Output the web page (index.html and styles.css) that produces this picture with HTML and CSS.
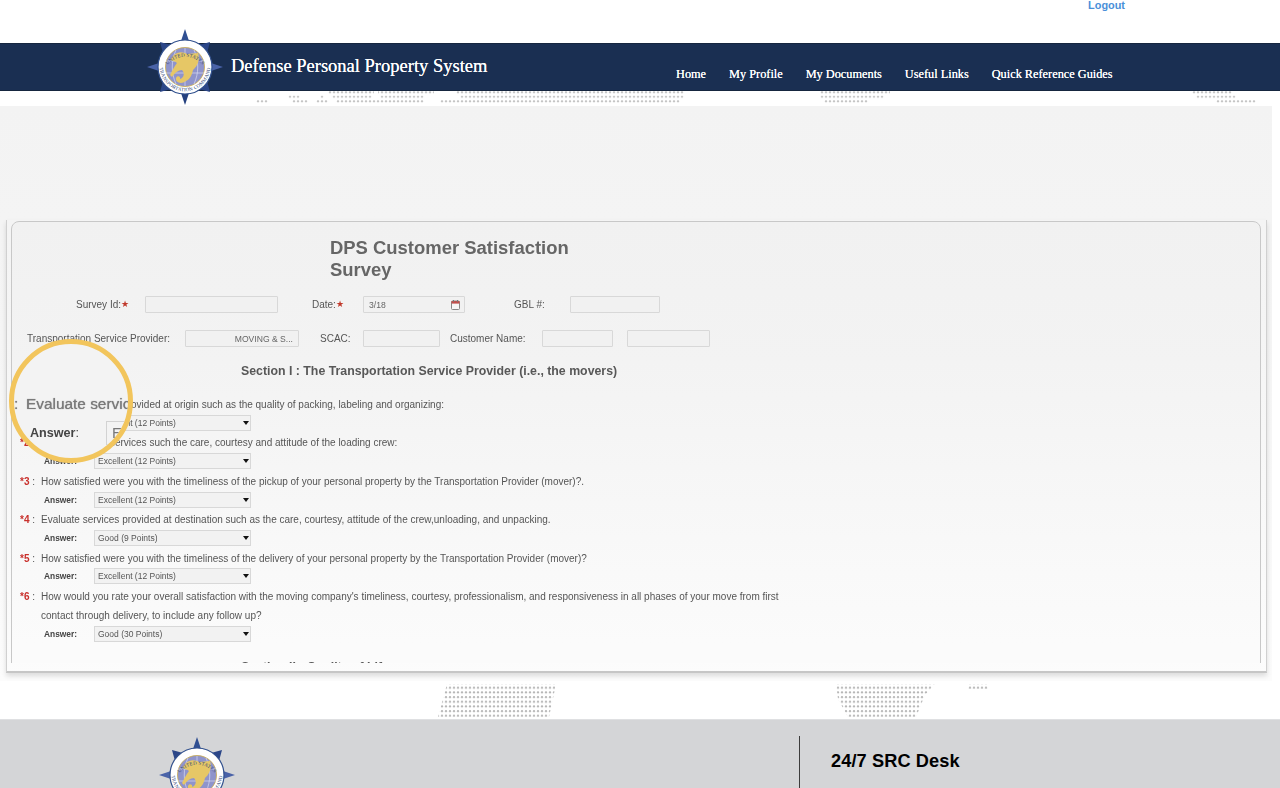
FILE: index.html
```html
<!DOCTYPE html>
<html lang="en">
<head>
<meta charset="utf-8">
<title>DPS Customer Satisfaction Survey</title>
<link rel="stylesheet" href="styles.css">
</head>
<body>
<svg class="defs" width="0" height="0" aria-hidden="true">
  <defs>
    <pattern id="dotsTop" width="4" height="4.5" patternUnits="userSpaceOnUse"><circle cx="2" cy="1.2" r="1.05" fill="#bdbdbd"/></pattern>
    <pattern id="dotsBottom" width="4" height="4.67" patternUnits="userSpaceOnUse"><circle cx="2" cy="2" r="1.1" fill="#b4b4b4"/></pattern>
    <symbol id="seal" viewBox="-39 -39 78 78">
      <polygon points="0,-38 6,-20 -6,-20" fill="#2f4f92"/>
      <polygon points="0,38 6,20 -6,20" fill="#24407f"/>
      <polygon points="-38,0 -20,-6 -20,6" fill="#4a63a8"/>
      <polygon points="38,0 20,-6 20,6" fill="#4a63a8"/>
      <polygon points="-25,-25 -22,-14 -14,-22" fill="#2b4688"/>
      <polygon points="25,-25 22,-14 14,-22" fill="#2b4688"/>
      <polygon points="-25,25 -22,14 -14,22" fill="#2b4688"/>
      <polygon points="25,25 22,14 14,22" fill="#2b4688"/>
      <circle r="27" fill="#fff" stroke="#33528f" stroke-width="1.2"/>
      <circle r="19.5" fill="#8f94cb" stroke="#c9a94a" stroke-width=".8"/>
      <path d="M-19,-6H19M-19,6H19M0,-19V19M-9,-17C-14,-6 -14,6 -9,17M9,-17C14,-6 14,6 9,17" fill="none" stroke="#d8daf0" stroke-width=".7"/>
      <path d="M-10,-12C-6,-16 0,-15 3,-13L14,-14C16,-8 14,-1 9,3C8,8 6,12 2,14C-3,18 -9,15 -8,11C-7,8 -3,9 -4,12C0,11 1,6 -2,3C-6,3 -9,6 -12,10L-14,8C-12,4 -10,0 -7,-4C-9,-6 -12,-6 -14,-7Z" fill="#e6c766" transform="translate(-1 0)"/>
      <path id="sealTop" d="M-21.5,6A22.3,22.3 0 0 1 21.5,6" fill="none"/>
      <path id="sealBottom" d="M-25.3,2A25.5,25.5 0 0 0 25.3,2" fill="none"/>
      <text class="seal-text"><textPath href="#sealTop" startOffset="50%" text-anchor="middle">UNITED STATES</textPath></text>
      <text class="seal-text"><textPath href="#sealBottom" startOffset="50%" text-anchor="middle">TRANSPORTATION COMMAND</textPath></text>
    </symbol>
  </defs>
</svg>
<div class="page">
  <div class="top"><a class="logout" href="#">Logout</a></div>

  <header class="band">
    <svg class="seal seal-head" role="img" aria-label="Seal"><use href="#seal"/></svg>
    <div class="brand">Defense Personal Property System</div>
    <nav class="nav">
      <a href="#">Home</a>
      <a href="#">My Profile</a>
      <a href="#">My Documents</a>
      <a href="#">Useful Links</a>
      <a href="#">Quick Reference Guides</a>
    </nav>
  </header>

  <svg class="strip-top" width="1280" height="15" aria-hidden="true">
    <g fill="url(#dotsTop)">
      <rect x="328" y="0" width="46" height="4"/><rect x="378" y="0" width="56" height="4"/><rect x="456" y="0" width="228" height="4"/><rect x="820" y="0" width="70" height="4"/><rect x="1192" y="0" width="40" height="4"/>
      <rect x="288" y="4.5" width="12" height="4"/><rect x="320" y="4.5" width="4" height="4"/><rect x="332" y="4.5" width="40" height="4"/><rect x="380" y="4.5" width="44" height="4"/><rect x="460" y="4.5" width="224" height="4"/><rect x="820" y="4.5" width="64" height="4"/><rect x="1196" y="4.5" width="40" height="4"/>
      <rect x="256" y="9" width="12" height="4"/><rect x="292" y="9" width="16" height="4"/><rect x="316" y="9" width="12" height="4"/><rect x="336" y="9" width="88" height="4"/><rect x="440" y="9" width="240" height="4"/><rect x="824" y="9" width="44" height="4"/><rect x="1216" y="9" width="40" height="4"/>
    </g>
  </svg>

  <main class="main">
    <div class="frame">
      <div class="clip">
        <form class="sheet">
          <h1 class="title">DPS Customer Satisfaction Survey</h1>

          <div class="fields fields-a">
            <label class="lbl lbl-id">Survey Id:<span class="req">★</span></label>
            <input class="box box-id" type="text">
            <label class="lbl lbl-date">Date:<span class="req">★</span></label>
            <span class="box box-date">3/18
              <svg class="cal" width="9" height="10" viewBox="0 0 9 10" aria-hidden="true"><rect x=".5" y="1" width="8" height="8.5" rx="1" fill="#f6f6f6" stroke="#888"/><rect x=".5" y="1" width="8" height="2.6" fill="#c0504d"/><path d="M2.5 0v2M6.5 0v2" stroke="#777"/></svg>
            </span>
            <label class="lbl lbl-gbl">GBL #:</label>
            <input class="box box-gbl" type="text">
          </div>

          <div class="fields fields-b">
            <label class="lbl lbl-tsp">Transportation Service Provider:</label>
            <input class="box box-tsp" type="text" value="MOVING &amp; S...">
            <label class="lbl lbl-scac">SCAC:</label>
            <input class="box box-scac" type="text">
            <label class="lbl lbl-cust">Customer Name:</label>
            <input class="box box-first" type="text">
            <input class="box box-last" type="text">
          </div>

          <h2 class="section">Section I : The Transportation Service Provider (i.e., the movers)</h2>

          <div class="q"><span class="num"><b>*1</b> :</span><p>Evaluate services provided at origin such as the quality of packing, labeling and organizing:</p></div>
          <div class="a"><span class="ans">Answer:</span><span class="sel"><select><option>Excellent (12 Points)</option></select></span></div>

          <div class="q"><span class="num"><b>*2</b> :</span><p>Evaluate origin services such the care, courtesy and attitude of the loading crew:</p></div>
          <div class="a"><span class="ans">Answer:</span><span class="sel"><select><option>Excellent (12 Points)</option></select></span></div>

          <div class="q"><span class="num"><b>*3</b> :</span><p>How satisfied were you with the timeliness of the pickup of your personal property by the Transportation Provider (mover)?.</p></div>
          <div class="a"><span class="ans">Answer:</span><span class="sel"><select><option>Excellent (12 Points)</option></select></span></div>

          <div class="q"><span class="num"><b>*4</b> :</span><p>Evaluate services provided at destination such as the care, courtesy, attitude of the crew,unloading, and unpacking.</p></div>
          <div class="a"><span class="ans">Answer:</span><span class="sel"><select><option>Good (9 Points)</option></select></span></div>

          <div class="q"><span class="num"><b>*5</b> :</span><p>How satisfied were you with the timeliness of the delivery of your personal property by the Transportation Provider (mover)?</p></div>
          <div class="a"><span class="ans">Answer:</span><span class="sel"><select><option>Excellent (12 Points)</option></select></span></div>

          <div class="q"><span class="num"><b>*6</b> :</span><p>How would you rate your overall satisfaction with the moving company's timeliness, courtesy, professionalism, and responsiveness in all phases of your move from first contact through delivery, to include any follow up?</p></div>
          <div class="a"><span class="ans">Answer:</span><span class="sel"><select><option>Good (30 Points)</option></select></span></div>

          <h2 class="section section-two">Section II : Quality of Life</h2>
        </form>
      </div>
    </div>

    <div class="lens">
      <div class="lens-q"><span class="lens-colon">:</span><span>Evaluate services</span></div>
      <div class="lens-a"><span class="lens-ans">Answer<i>:</i></span><span class="lens-sel">Excellent</span></div>
    </div>
  </main>

  <svg class="strip-bottom" width="1280" height="38" aria-hidden="true">
    <g fill="url(#dotsBottom)">
      <polygon points="447,3 555,3 555,8 549,36 438,36"/>
      <polygon points="836,3 935,3 925,14 916,36 848,36 838,18"/>
      <rect x="968" y="3" width="20" height="5"/>
    </g>
  </svg>

  <footer class="footer">
    <svg class="seal seal-foot" role="img" aria-label="Seal"><use href="#seal"/></svg>
    <div class="divider"></div>
    <div class="desk">24/7 SRC Desk</div>
  </footer>
</div>
</body>
</html>
```
FILE: styles.css
```css
* { box-sizing: border-box; }
html, body { margin: 0; padding: 0; height: 788px; overflow: hidden; background: #fff; }
body { font-family: "Liberation Sans", Arial, sans-serif; color: #555; }
.defs { position: absolute; }
.page { width: 1280px; height: 788px; overflow: hidden; display: flex; flex-direction: column; }

.top { height: 43px; flex: none; display: flex; justify-content: flex-end; padding-right: 155px; }
.logout { font-size: 10.9px; font-weight: bold; color: #4a90d9; text-decoration: none; line-height: 11px; }

.band { position: relative; height: 48px; flex: none; background: #1a2f52; border-top: 1px solid #16263f; border-bottom: 1px solid #16263f; display: flex; padding-left: 231px; font-family: "Liberation Serif", "Times New Roman", serif; color: #fff; }
.seal { display: block; flex: none; width: 78px; height: 78px; }
.seal-head { position: absolute; left: 146px; top: -16px; }
.seal-text { font-family: "Liberation Serif", serif; font-size: 5px; fill: #2a3f78; letter-spacing: .2px; }
.brand { font-size: 18.5px; line-height: 44px; width: 445px; white-space: nowrap; text-shadow: 0 0 .4px #fff; }
.nav { display: flex; gap: 23px; padding-top: 21px; }
.nav a { color: #fff; text-decoration: none; font-size: 12.3px; line-height: 18px; white-space: nowrap; text-shadow: 0 0 .3px #fff; }

.strip-top { display: block; flex: none; }
.strip-bottom { display: block; flex: none; }

.main { position: relative; width: 1272px; height: 575px; flex: none; padding: 114px 0 0 6px; background: linear-gradient(#f3f3f3, #f5f5f5 40%, #fcfcfc); }
.frame { width: 1261px; height: 453px; padding: 1px 5px 0 4px; border: 1px solid #d0d0d0; border-top: 0; border-bottom: 2px solid #c6c6c6; box-shadow: 0 3px 5px rgba(0,0,0,.13); }
.clip { height: 442px; overflow: hidden; }
.sheet { min-height: 470px; padding-top: 15px; border: 1px solid #c8c8c8; border-radius: 8px; font-size: 10px; background: linear-gradient(#f1f1f1, #f3f3f3 30%, #fbfbfb 90%); filter: blur(.25px); }

.title { width: 260px; margin: 0 0 16px 318px; font-size: 18.45px; line-height: 21.5px; font-weight: bold; color: #666; }
.fields { display: flex; align-items: center; height: 17px; font-size: 10px; }
.fields-b { margin-top: 17px; }
.lbl { white-space: nowrap; color: #555; }
.req { color: #c0392b; font-size: 9px; line-height: 10px; vertical-align: 1px; }
.box { height: 17px; border: 1px solid #d8d8d8; background: #f1f1f1; font: 8.6px "Liberation Sans", Arial, sans-serif; color: #666; padding: 0 5px; display: flex; align-items: center; justify-content: space-between; border-radius: 1px; outline: 0; }
.lbl-id { margin-left: 64px; width: 69px; }
.box-id { width: 133px; }
.lbl-date { margin-left: 34px; width: 51px; }
.box-date { width: 102px; }
.cal { flex: none; margin-right: -1px; }
.lbl-gbl { margin-left: 49px; width: 56px; }
.box-gbl { width: 90px; }
.lbl-tsp { margin-left: 15px; width: 158px; }
.box-tsp { width: 114px; text-align: right; }
.lbl-scac { margin-left: 21px; width: 43px; }
.box-scac { width: 77px; }
.lbl-cust { margin-left: 10px; width: 92px; }
.box-first { width: 71px; }
.box-last { width: 83px; margin-left: 14px; }

.section { margin: 16px 0 15px 229px; font-size: 12.33px; line-height: 16px; font-weight: bold; color: #585858; }
.section-two { margin-top: 15px; }
.q { display: flex; line-height: 19.2px; padding: 1px 0 0 8px; margin-bottom: -1px; }
.num { width: 21px; flex: none; color: #555; white-space: nowrap; }
.num b { color: #c9302c; font-weight: bold; }
.q p { margin: 0; width: 745px; color: #555; }
.a { display: flex; align-items: center; height: 19.2px; padding-left: 32px; }
.ans { width: 50px; font-size: 8.4px; font-weight: bold; color: #444; }
.sel { position: relative; display: block; width: 157px; height: 16px; }
.sel::after { content: ""; position: absolute; right: 2px; top: 6px; border: 3px solid transparent; border-top: 4px solid #111; border-bottom: 0; }
.sel select { display: block; width: 100%; height: 16px; appearance: none; -webkit-appearance: none; border: 1px solid #d8d8d8; border-radius: 0; background: #f2f2f2; padding: 0 3px; font: 8.5px "Liberation Sans", Arial, sans-serif; color: #555; }

.lens { position: absolute; left: 9px; top: 233px; width: 124px; height: 124px; border: 5px solid #f2c55c; border-radius: 50%; overflow: hidden; background: #f3f3f3; padding-top: 50px; white-space: nowrap; }
.lens-q { display: flex; height: 20px; line-height: 20px; font-size: 15.4px; color: #7a7a7a; filter: blur(.7px); text-shadow: 0 0 1px #777; }
.lens-colon { width: 12px; flex: none; }
.lens-a { display: flex; align-items: center; height: 24px; margin-top: 7px; padding-left: 16px; }
.lens-ans { width: 76px; flex: none; font-size: 12.6px; font-weight: bold; color: #444; filter: blur(.7px); }
.lens-ans i { font-style: normal; font-weight: normal; }
.lens-sel { width: 120px; height: 24px; flex: none; border: 1px solid #d2d2d2; padding-left: 5px; font-size: 15px; line-height: 22px; color: #777; filter: blur(.5px); }

.footer { flex: 1; min-height: 0; display: flex; padding: 16px 0 0 158px; background: #d4d5d7; border-top: 1px solid #dfe0e2; overflow: hidden; }
.seal-foot { width: 78px; height: 78px; }
.divider { flex: none; width: 1px; height: 60px; margin-left: 563px; background: #3c3c3c; }
.desk { margin-left: 31px; font-size: 18.2px; line-height: 20px; padding-top: 15px; color: #000; font-weight: bold; letter-spacing: .1px; white-space: nowrap; }
```
